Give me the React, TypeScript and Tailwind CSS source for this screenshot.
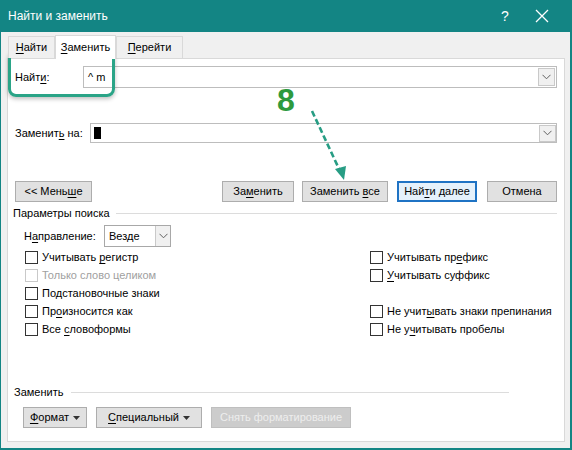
import React from 'react';

const U: React.FC<{ children: React.ReactNode }> = ({ children }) => (
  <span className="underline underline-offset-2">{children}</span>
);

const Btn: React.FC<{ className?: string; children: React.ReactNode; disabled?: boolean; focused?: boolean }> = ({
  className = '',
  children,
  disabled,
  focused,
}) => (
  <div
    className={
      'h-[21px] flex items-center justify-center whitespace-nowrap ' +
      (disabled
        ? 'bg-[#cccccc] border border-[#bfbfbf] text-[#eeeeee]'
        : focused
        ? 'bg-[#e5f1fb] border-2 border-[#1f73c4] text-black'
        : 'bg-[#e1e1e1] border border-[#adadad] text-black') +
      ' ' +
      className
    }
  >
    <span className="flex items-center">{children}</span>
  </div>
);

const Check: React.FC<{ children?: React.ReactNode; disabled?: boolean }> = ({ children, disabled }) => (
  <div className="h-[18px] flex items-center gap-[4px] whitespace-nowrap">
    {children !== undefined && (
      <>
        <div
          className={
            'w-[13px] h-[13px] bg-white border ' + (disabled ? 'border-[#c9c9c9]' : 'border-[#333333]')
          }
        />
        <span className={disabled ? 'text-[#a0a0a0]' : 'text-black'}>{children}</span>
      </>
    )}
  </div>
);

const Chevron: React.FC = () => (
  <svg width="9" height="6" viewBox="0 0 9 6" fill="none">
    <path d="M0.5 0.8 L4.5 4.8 L8.5 0.8" stroke="#606060" strokeWidth="1" />
  </svg>
);

const Caret: React.FC = () => (
  <svg width="7" height="4" viewBox="0 0 7 4" className="ml-[4px]">
    <path d="M0 0 H7 L3.5 4 Z" fill="#333" />
  </svg>
);

export default function App() {
  return (
    <div
      className="w-[572px] h-[450px] bg-[#138584] flex flex-col relative overflow-hidden text-[11px] text-black"
      style={{ fontFamily: '"Liberation Sans", Arial, sans-serif' }}
    >
      {/* Title bar */}
      <div className="h-[32px] flex items-center pl-[8px] text-white text-[12px] shrink-0">
        <span className="flex-1">Найти и заменить</span>
        <span className="w-[20px] text-center text-[14px] mr-[20px]">?</span>
        <svg width="14" height="14" viewBox="0 0 14 14" className="mr-[23px]">
          <path d="M1 1 L13 13 M13 1 L1 13" stroke="#ffffff" strokeWidth="1.3" />
        </svg>
      </div>

      {/* Body */}
      <div className="flex-1 bg-[#f0f0f0] ml-[1px] mr-[2px] mb-[2px] flex flex-col pl-[6px] pr-[5px] pt-[2px] pb-[6px] whitespace-nowrap">
        {/* Tabs */}
        <div className="flex items-end h-[24px] ml-[1px] relative z-10">
          <div className="w-[47px] h-[22px] bg-[#f0f0f0] border border-[#d9d9d9] border-b-0 flex items-center justify-center">
            <span>
              <U>Н</U>айти
            </span>
          </div>
          <div className="w-[61px] h-[24px] bg-white border border-[#d9d9d9] border-b-0 flex items-center justify-center mb-[-1px]">
            <span>
              <U>З</U>аменить
            </span>
          </div>
          <div className="w-[67px] h-[22px] bg-[#f0f0f0] border border-[#d9d9d9] border-b-0 flex items-center justify-center">
            <span>
              <U>П</U>ерейти
            </span>
          </div>
        </div>

        {/* Panel */}
        <div className="flex-1 bg-white border border-[#d9d9d9] flex flex-col pl-[7px] pr-[7px] pt-[7px]">
          {/* Find row */}
          <div className="flex items-center h-[22px]">
            <div className="w-[68px]">
              Найт<U>и</U>:
            </div>
            <div className="flex-1 h-[22px] border border-[#bdbdbd] flex items-center">
              <span className="flex-1 pl-[4px]">^ m</span>
              <div className="w-[17px] h-[18px] mr-[1px] bg-[#f0f0f0] border border-[#c9c9c9] flex items-center justify-center">
                <Chevron />
              </div>
            </div>
          </div>

          {/* Replace row */}
          <div className="flex items-center h-[20px] mt-[35px]">
            <div className="w-[75px]">
              Заменит<U>ь</U> на:
            </div>
            <div className="flex-1 h-[20px] border border-[#bdbdbd] flex items-center">
              <div className="w-[7px] h-[12px] bg-black ml-[3px]" />
              <div className="flex-1" />
              <div className="w-[17px] h-[17px] bg-[#f0f0f0] border border-[#c9c9c9] flex items-center justify-center">
                <Chevron />
              </div>
            </div>
          </div>

          {/* Buttons row */}
          <div className="flex items-center mt-[38px]">
            <Btn className="w-[77px]">
              &lt;&lt; Мень<U>ш</U>е
            </Btn>
            <div className="flex-1" />
            <Btn className="w-[72px]">
              За<U>м</U>енить
            </Btn>
            <Btn className="w-[86px] ml-[8px]">
              Заменить&nbsp;<U>в</U>се
            </Btn>
            <Btn className="w-[80px] ml-[9px]" focused>
              Най<U>т</U>и&nbsp;далее
            </Btn>
            <Btn className="w-[70px] ml-[10px]">Отмена</Btn>
          </div>

          {/* Search params */}
          <div className="flex items-center mt-[4px] h-[14px] -ml-[2px]">
            <span>Параметры поиска</span>
            <div className="flex-1 h-[1px] bg-[#dcdcdc] ml-[6px]" />
          </div>

          <div className="flex items-center mt-[5px] ml-[9px] h-[22px]">
            <span className="w-[80px]">
              Н<U>а</U>правление:
            </span>
            <div className="w-[67px] h-[22px] border border-[#a8a8a8] flex items-center bg-white">
              <span className="flex-1 pl-[4px]">Везде</span>
              <div className="w-[15px] h-[20px] border-l border-[#c9c9c9] bg-[#f0f0f0] flex items-center justify-center">
                <Chevron />
              </div>
            </div>
          </div>

          <div className="grid grid-cols-[345px_1fr] ml-[10px] mt-[1px] leading-[18px]">
            <div className="flex flex-col">
              <Check>
                Учитывать <U>р</U>егистр
              </Check>
              <Check disabled>Только слово целиком</Check>
              <Check>Подстановочные знаки</Check>
              <Check>
                Пр<U>о</U>износится как
              </Check>
              <Check>
                Все <U>с</U>ловоформы
              </Check>
            </div>
            <div className="flex flex-col">
              <Check>
                Учитывать пр<U>е</U>фикс
              </Check>
              <Check>
                <U>У</U>читывать суффикс
              </Check>
              <Check />
              <Check>
                Не учит<U>ы</U>вать знаки препинания
              </Check>
              <Check>
                Не у<U>ч</U>итывать пробелы
              </Check>
            </div>
          </div>

          <div className="flex-1" />

          {/* Replace section */}
          <div className="flex items-center h-[14px] -ml-[1px] pr-[48px]">
            <span>Заменить</span>
            <div className="flex-1 h-[1px] bg-[#dcdcdc] ml-[8px]" />
          </div>
          <div className="flex items-center mt-[8px] mb-[13px] ml-[8px] gap-[9px]">
            <Btn className="w-[64px]">
              <U>Ф</U>ормат
              <Caret />
            </Btn>
            <Btn className="w-[106px]">
              <U>С</U>пециальный
              <Caret />
            </Btn>
            <Btn className="w-[140px]" disabled>
              Снять форматирование
            </Btn>
          </div>
        </div>
      </div>

      {/* Annotation overlay: highlight box, number and arrow */}
      <div className="absolute left-[8px] top-[50px] w-[107px] h-[47px] rounded-[8px] border-[3px] border-[#2aa487] shadow-[0_2px_4px_rgba(0,0,0,0.25)]" />
      <div className="absolute left-[277px] top-[84px] text-[32px] font-bold leading-none text-[#2e9a3e]">8</div>
      <svg className="absolute left-[300px] top-[105px]" width="60" height="80" viewBox="0 0 60 80">
        <path d="M12 6 L40 66" stroke="#279d84" strokeWidth="2.6" strokeDasharray="6 3" fill="none" />
        <path d="M35 64 L44 75 L46 61 Z" fill="#279d84" />
      </svg>
    </div>
  );
}
